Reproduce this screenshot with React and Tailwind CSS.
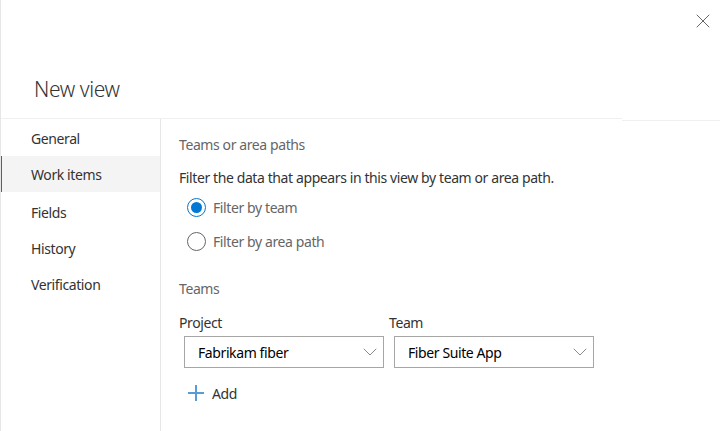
import { X, ChevronDown } from "lucide-react";

const navItems = ["General", "Work items", "Fields", "History", "Verification"];

const Radio = ({ checked, label }) => (
  <div className="flex h-[34px] items-center">
    <span
      className={
        checked
          ? "ml-[8px] flex h-[19px] w-[19px] items-center justify-center rounded-full border border-[#0078d4]"
          : "ml-[8px] flex h-[19px] w-[19px] items-center justify-center rounded-full border border-[#666666]"
      }
    >
      {checked && <span className="h-[11px] w-[11px] rounded-full bg-[#0078d4]" />}
    </span>
    <span className="ml-[7px] text-[14px] text-[#666666]">{label}</span>
  </div>
);

const Dropdown = ({ value }) => (
  <div className="flex h-[32px] w-[200px] items-center justify-between border border-[#a6a6a6] pl-[13px] pr-[1px]">
    <span className="text-[14px] text-black">{value}</span>
    <ChevronDown className="h-[24px] w-[24px] text-[#8a8a8a]" strokeWidth={1} />
  </div>
);

export default function App() {
  const selected = "Work items";

  return (
    <div
      className="relative h-[431px] w-[720px] overflow-hidden border-l border-[#e6e6e6] bg-white tracking-[-0.4px] text-[#333333]"
      style={{ fontFamily: '"Noto Sans", "Open Sans", sans-serif' }}
    >
      {/* Close button */}
      <button className="absolute right-[5px] top-[9px] flex h-[24px] w-[24px] items-center justify-center text-[#666666]">
        <X className="h-[24px] w-[24px]" strokeWidth={1} />
      </button>

      {/* Header */}
      <div className="h-[118px] pl-[33px] pt-[74px]">
        <h1 className="text-[21px] font-light leading-[30px] text-[#333333]">New view</h1>
      </div>

      {/* Divider */}
      <div className="flex h-[1px] items-start">
        <div className="h-[1px] w-[621px] bg-[#f0f0f0]" />
        <div className="mt-[2px] h-[1px] flex-1 bg-[#f0f0f0]" />
      </div>

      <div className="flex h-[312px]">
        {/* Left nav */}
        <nav className="w-[160px] border-r border-[#e6e6e6] pt-[1px]">
          {navItems.map((item) => (
            <div
              key={item}
              className={
                item === selected
                  ? "relative -ml-[1px] flex h-[36px] items-center bg-[#f4f4f4] pl-[31px] text-[14px]"
                  : item === "Fields"
                  ? "mt-[2px] flex h-[36px] items-center pl-[30px] text-[14px]"
                  : "flex h-[36px] items-center pl-[30px] text-[14px]"
              }
            >
              {item === selected && (
                <span className="absolute left-0 top-0 h-full w-[2px] bg-[#0078d4]" />
              )}
              {item}
            </div>
          ))}
        </nav>

        {/* Content */}
        <div className="flex-1 pl-[18px] pt-[16px]">
          <div className="text-[14px] leading-[20px] text-[#666666]">Teams or area paths</div>
          <div className="mt-[13px] text-[14px] leading-[20px] text-[#333333]">
            Filter the data that appears in this view by team or area path.
          </div>
          <div className="mt-[2px]">
            <Radio checked label="Filter by team" />
            <Radio label="Filter by area path" />
          </div>

          <div className="mt-[21px] text-[14px] leading-[20px] text-[#666666]">Teams</div>

          <div className="mt-[14px] flex">
            <div className="w-[210px]">
              <div className="text-[14px] leading-[20px] text-[#333333]">Project</div>
              <div className="ml-[5px] mt-[3px]">
                <Dropdown value="Fabrikam fiber" />
              </div>
            </div>
            <div className="w-[210px]">
              <div className="text-[14px] leading-[20px] text-[#333333]">Team</div>
              <div className="ml-[5px] mt-[3px]">
                <Dropdown value="Fiber Suite App" />
              </div>
            </div>
          </div>

          <button className="ml-[9px] mt-[9px] flex h-[32px] items-center">
            <svg width="16" height="16" viewBox="0 0 16 16" className="text-[#5b9bd5]">
              <path d="M8 0v16M0 8h16" stroke="currentColor" strokeWidth="2" fill="none" />
            </svg>
            <span className="ml-[8px] text-[14px] text-[#333333]">Add</span>
          </button>
        </div>
      </div>
    </div>
  );
}
